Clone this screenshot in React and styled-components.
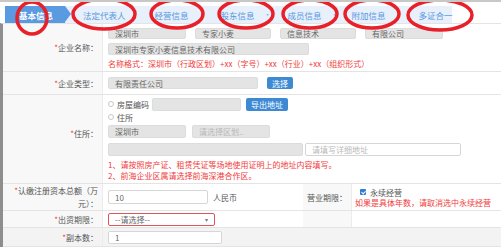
import styled, { createGlobalStyle } from "styled-components";

const GlobalStyle = createGlobalStyle`
  html, body {
    margin: 0;
    padding: 0;
    background: #fff;
    font-family: "Noto Sans CJK SC", "Noto Sans", sans-serif;
    font-size: 8px;
    color: #555;
  }
  * { box-sizing: border-box; }
`;

const Page = styled.div`
  position: relative;
  width: 501px;
  height: 249px;
  overflow: hidden;
  border-top: 2px solid #c8c8c8;
`;

const TabBar = styled.div`
  display: flex;
  align-items: center;
  height: 17px;
  margin: 4px 0 0 5px;
  width: 447px;
  background: #e7f0fb;
  white-space: nowrap;
`;

const ActiveTab = styled.div`
  position: relative;
  flex: none;
  height: 17px;
  width: 60px;
  background: #5a9ae0;
  color: #fff;
  font-weight: bold;
  font-size: 8.5px;
  display: flex;
  align-items: center;
  padding-left: 14px;
  &::after {
    content: "";
    position: absolute;
    right: -6px;
    top: 0;
    border-left: 6px solid #5a9ae0;
    border-top: 8.5px solid transparent;
    border-bottom: 8.5px solid transparent;
  }
`;

const Tab = styled.div`
  flex: none;
  color: #5897de;
  font-size: 8.5px;
  margin-left: ${(p) => p.$ml}px;
  display: flex;
  align-items: center;
  gap: 9px;
`;

const Dot = styled.span`
  color: #7fb0e8;
  font-size: 8px;
`;

const Table = styled.div`
  border-left: 3px solid #8e8e8e;
  border-top: 1px solid #e4e4e4;
`;

const Row = styled.div`
  display: grid;
  grid-template-columns: ${(p) => (p.$split ? "100px 200px 49px 1fr" : "100px 1fr")};
  min-height: ${(p) => p.$h}px;
  border-bottom: 1px solid #e4e4e4;
  background: ${(p) => (p.$gray ? "#f3f3f3" : "#fff")};
`;

const Label = styled.div`
  background: ${(p) => (p.$plain ? "transparent" : "#f8f8f8")};
  display: flex;
  align-items: center;
  justify-content: flex-end;
  text-align: right;
  padding: ${(p) => p.$pad || "0 4px 0 0"};
  border-right: 1px solid #ececec;
  line-height: 13px;
  color: #555;
`;

const Star = styled.span`
  color: #e8433a;
`;

const Cell = styled.div`
  display: flex;
  flex-direction: column;
  justify-content: center;
  gap: ${(p) => p.$gap || 0}px;
  padding: ${(p) => p.$pad || "0 0 0 5px"};
`;

const Line = styled.div`
  display: flex;
  align-items: center;
  gap: ${(p) => p.$gap || 0}px;
  margin-left: ${(p) => p.$ml || 0}px;
  margin-top: ${(p) => p.$mt || 0}px;
`;

const Input = styled.div`
  flex: none;
  width: ${(p) => p.$w}px;
  height: ${(p) => p.$h || 12}px;
  margin-left: ${(p) => p.$ml || 0}px;
  background: ${(p) => (p.$white ? "#fff" : "#e4e4e4")};
  border: 1px solid ${(p) => (p.$red ? "#e0555a" : p.$white ? "#d6d6d6" : "#dcdcdc")};
  border-radius: 2px;
  color: ${(p) => (p.$faint ? "#b9b9b9" : "#666")};
  display: flex;
  align-items: center;
  justify-content: space-between;
  padding: 0 6px;
  font-size: 8px;
  white-space: nowrap;
  overflow: hidden;
`;

const Button = styled.div`
  height: ${(p) => p.$h || 12}px;
  margin-left: ${(p) => p.$ml || 0}px;
  padding: 0 5px;
  background: #3d8ad3;
  color: #fff;
  border-radius: 2px;
  display: flex;
  align-items: center;
  font-size: 8px;
`;

const RedText = styled.div`
  color: #f03a3a;
  font-size: 8px;
  line-height: ${(p) => p.$lh || 10}px;
  margin-top: ${(p) => p.$mt || 0}px;
  white-space: nowrap;
`;

const Radio = styled.span`
  display: inline-block;
  width: 6px;
  height: 6px;
  border: 1px solid #c8c8c8;
  border-radius: 50%;
  margin-right: 3px;
`;

const Check = styled.span`
  display: inline-block;
  width: 6px;
  height: 6px;
  background: #2f7fd0;
  border-radius: 1px;
  margin-right: 4px;
  position: relative;
  &::after {
    content: "";
    position: absolute;
    left: 1.5px;
    top: 0.5px;
    width: 2px;
    height: 3px;
    border: solid #fff;
    border-width: 0 1px 1px 0;
    transform: rotate(45deg);
  }
`;

const Plain = styled.span`
  color: #555;
  font-size: 8px;
`;

const Caret = styled.span`
  font-size: 6px;
  color: #777;
`;

const Marks = styled.svg`
  position: absolute;
  left: 0;
  top: 0;
  pointer-events: none;
`;

const ellipses = [
  [32, 16, 15, 16],
  [104, 12, 31, 15],
  [177, 12, 26, 14],
  [246, 12, 27, 14],
  [310, 12, 27, 14],
  [372, 12, 27, 14],
  [440, 13, 32, 15],
];

export default function App() {
  return (
    <>
      <GlobalStyle />
      <Page>
        <TabBar>
          <ActiveTab>基本信息</ActiveTab>
          <Tab $ml={18}>法定代表人</Tab>
          <Tab $ml={29}>经营信息<Dot>•</Dot></Tab>
          <Tab $ml={15}>股东信息<Dot>•</Dot></Tab>
          <Tab $ml={16}>成员信息<Dot>•</Dot></Tab>
          <Tab $ml={13}>附加信息<Dot>•</Dot></Tab>
          <Tab $ml={16}>多证合一</Tab>
        </TabBar>
        <Table>
          <Row $h={47}>
            <Label>
              <span><Star>*</Star>企业名称：</span>
            </Label>
            <Cell $gap={4} $pad="4px 0 2px 5px">
              <Line $gap={9}>
                <Input $w={78} $h={11}>深圳市</Input>
                <Input $w={76} $h={11}>专家小麦</Input>
                <Input $w={76} $h={11}>信息技术</Input>
                <Input $w={78} $h={11}>有限公司</Input>
              </Line>
              <Input $w={201}>深圳市专家小麦信息技术有限公司</Input>
              <RedText>名称格式：深圳市（行政区划）+xx（字号）+xx（行业）+xx（组织形式）</RedText>
            </Cell>
          </Row>
          <Row $h={23}>
            <Label>
              <span><Star>*</Star>企业类型：</span>
            </Label>
            <Cell>
              <Line $gap={9}>
                <Input $w={150}>有限责任公司</Input>
                <Button>选择</Button>
              </Line>
            </Cell>
          </Row>
          <Row $h={89}>
            <Label $pad="0 4px 12px 0">
              <span><Star>*</Star>住所：</span>
            </Label>
            <Cell $pad="2px 0 2px 5px">
              <Line>
                <Radio />
                <Plain>房屋编码</Plain>
                <Input $w={89} $h={13} $ml={3} />
                <Button $ml={5} $h={13}>导出地址</Button>
              </Line>
              <Line $mt={1}>
                <Radio />
                <Plain>住所</Plain>
              </Line>
              <Line $gap={6} $mt={2}>
                <Input $w={78} $h={13}>深圳市</Input>
                <Input $w={78} $h={13} $faint>请选择区划..</Input>
              </Line>
              <Line $gap={2} $mt={5}>
                <Input $w={195} $h={13} />
                <Input $w={156} $h={13} $white $faint>请填写详细地址</Input>
              </Line>
              <RedText $lh={11} $mt={3}>1、请按照房产证、租赁凭证等场地使用证明上的地址内容填写。</RedText>
              <RedText $lh={11}>2、前海企业区属请选择前海深港合作区。</RedText>
            </Cell>
          </Row>
          <Row $h={27} $split>
            <Label $pad="0 4px 0 10px">
              <span><Star>*</Star>认缴注册资本总额（万元）：</span>
            </Label>
            <Cell>
              <Line $gap={5}>
                <Input $w={100} $h={14} $white>10</Input>
                <Plain>人民币</Plain>
              </Line>
            </Cell>
            <Label>营业期限：</Label>
            <Cell $pad="0 0 0 3px">
              <Line $ml={5}>
                <Check />
                <Plain>永续经营</Plain>
              </Line>
              <RedText>如果是具体年数，请取消选中永续经营</RedText>
            </Cell>
          </Row>
          <Row $h={17} $split>
            <Label>
              <span><Star>*</Star>出资期限：</span>
            </Label>
            <Cell>
              <Input $w={107} $h={13} $white $red>
                --请选择--<Caret>▾</Caret>
              </Input>
            </Cell>
            <Label />
            <Cell />
          </Row>
          <Row $h={19} $gray>
            <Label $plain>
              <span><Star>*</Star>副本数：</span>
            </Label>
            <Cell>
              <Input $w={114} $h={13} $white>1</Input>
            </Cell>
          </Row>
        </Table>
        <Marks width="501" height="249">
          {ellipses.map(([cx, cy, rx, ry], i) => (
            <ellipse key={i} cx={cx} cy={cy} rx={rx} ry={ry} fill="none" stroke="#e8202a" strokeWidth="3.5" />
          ))}
        </Marks>
      </Page>
    </>
  );
}
